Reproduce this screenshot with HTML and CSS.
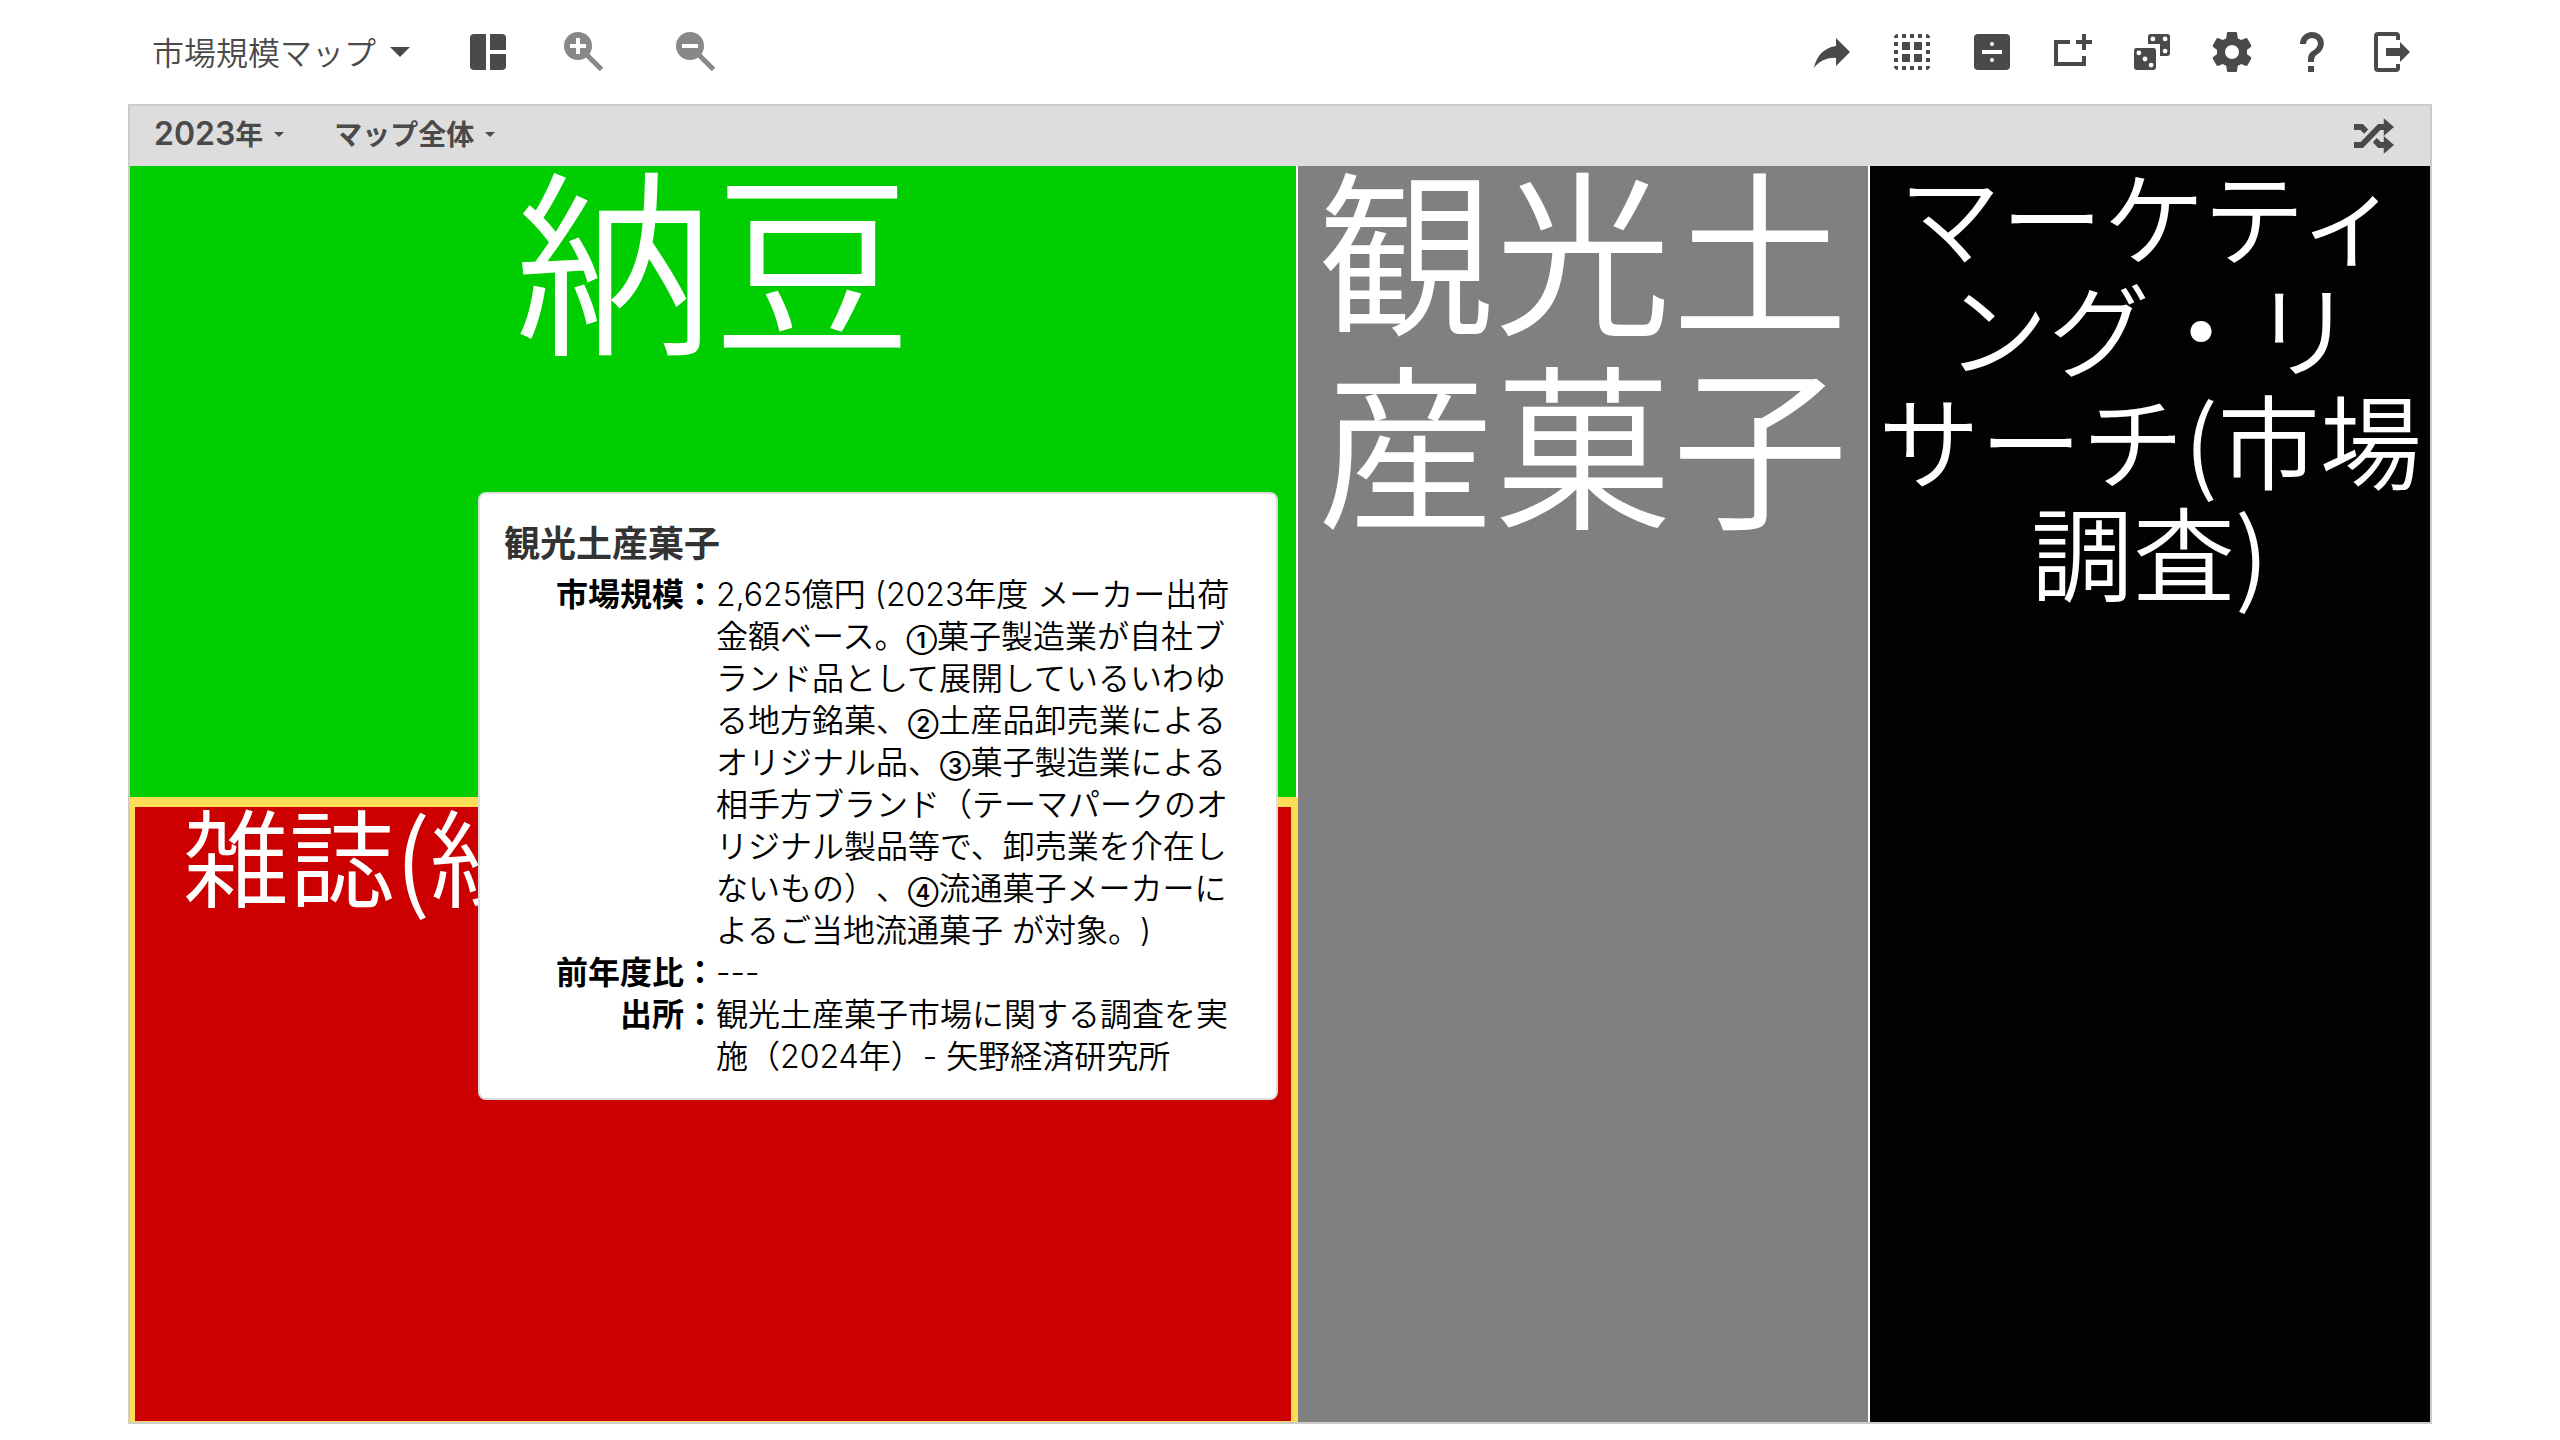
FILE: index.html
```html
<!DOCTYPE html>
<html lang="ja">
<head>
<meta charset="utf-8">
<meta name="viewport" content="width=device-width, initial-scale=1">
<title>市場規模マップ</title>
<link rel="stylesheet" href="styles.css">
</head>
<body>
<header class="toolbar">
  <button class="map-name" type="button">市場規模マップ<span class="caret"></span></button>
  <button class="icon-button layout-button" type="button" aria-label="レイアウト">
    <svg class="icon" viewBox="0 0 24 24"><path d="M5 3h6v18H5a2 2 0 0 1-2-2V5a2 2 0 0 1 2-2zM13 3h6a2 2 0 0 1 2 2v6h-8zM13 13h8v6a2 2 0 0 1-2 2h-6z"/></svg>
  </button>
  <div class="zoom-group">
    <button class="icon-button" type="button" aria-label="拡大">
      <svg class="icon-zoom" viewBox="0 0 40 40"><circle cx="14" cy="14" r="14"/><path class="handle" d="M23 23L37.500 37.500"/><path class="sign" d="M6 12h6V6h4v6h6v4h-6v6h-4v-6H6z"/></svg>
    </button>
    <button class="icon-button" type="button" aria-label="縮小">
      <svg class="icon-zoom" viewBox="0 0 40 40"><circle cx="14" cy="14" r="14"/><path class="handle" d="M23 23L37.500 37.500"/><path class="sign" d="M6 12h16v4H6z"/></svg>
    </button>
  </div>
  <nav class="actions">
    <button class="icon-button" type="button" aria-label="共有">
      <svg class="icon" viewBox="0 0 24 24"><path d="M21 12l-7-7v4C7 10 4 15 3 20c2.500-3.500 6-5.100 11-5.100V19z"/></svg>
    </button>
    <button class="icon-button" type="button" aria-label="グループ選択">
      <svg class="icon" viewBox="0 0 24 24"><path d="M5 3v2H3a2 2 0 0 1 2-2zM7 3h2v2H7zM11 3h2v2h-2zM15 3h2v2h-2zM19 3a2 2 0 0 1 2 2h-2zM3 7h2v2H3zM3 11h2v2H3zM3 15h2v2H3zM19 7h2v2h-2zM19 11h2v2h-2zM19 15h2v2h-2zM3 19h2v2a2 2 0 0 1-2-2zM7 19h2v2H7zM11 19h2v2h-2zM15 19h2v2h-2zM19 19h2a2 2 0 0 1-2 2zM7 7h4v4H7zM13 7h4v4h-4zM7 13h4v4H7zM13 13h4v4h-4z"/></svg>
    </button>
    <button class="icon-button" type="button" aria-label="分割">
      <svg class="icon" viewBox="0 0 24 24"><rect x="3" y="3" width="18" height="18" rx="2"/><g class="cut"><path d="M7 11h10v2H7z"/><circle cx="12" cy="8" r="1"/><circle cx="12" cy="16" r="1"/></g></svg>
    </button>
    <button class="icon-button" type="button" aria-label="追加">
      <svg class="icon" viewBox="0 0 24 24"><path d="M3 6h8v2H5v9h12v-3h2v5H3zM17 3h2v3h3v2h-3v3h-2V8h-3V6h3z"/></svg>
    </button>
    <button class="icon-button" type="button" aria-label="ランダム">
      <svg class="icon" viewBox="0 0 24 24"><path d="M11.220 3h8.560A1.220 1.220 0 0 1 21 4.220v8.560A1.220 1.220 0 0 1 19.780 14H16V8h-6V4.220A1.220 1.220 0 0 1 11.220 3z"/><rect x="3" y="10" width="11" height="11" rx="1.220"/><g class="cut"><circle cx="12.440" cy="5.440" r="1.200"/><circle cx="18.560" cy="5.440" r="1.200"/><circle cx="18.560" cy="11.560" r="1.200"/><circle cx="5.440" cy="12.440" r="1.200"/><circle cx="8.500" cy="15.500" r="1.200"/><circle cx="11.560" cy="18.560" r="1.200"/></g></svg>
    </button>
    <button class="icon-button" type="button" aria-label="設定">
      <svg class="icon" viewBox="0 0 24 24"><path d="M12,15.5A3.5,3.5 0 0,1 8.5,12A3.5,3.5 0 0,1 12,8.5A3.5,3.5 0 0,1 15.5,12A3.5,3.5 0 0,1 12,15.5M19.43,12.97C19.47,12.65 19.5,12.33 19.5,12C19.5,11.67 19.47,11.34 19.43,11L21.54,9.37C21.73,9.22 21.78,8.95 21.66,8.73L19.66,5.27C19.54,5.05 19.27,4.96 19.05,5.05L16.56,6.05C16.04,5.66 15.5,5.32 14.87,5.07L14.5,2.42C14.46,2.18 14.25,2 14,2H10C9.75,2 9.54,2.18 9.5,2.42L9.13,5.07C8.5,5.32 7.96,5.66 7.44,6.05L4.95,5.05C4.73,4.96 4.46,5.05 4.34,5.27L2.34,8.73C2.21,8.95 2.27,9.22 2.46,9.37L4.57,11C4.53,11.34 4.5,11.67 4.5,12C4.5,12.33 4.53,12.65 4.57,12.97L2.46,14.63C2.27,14.78 2.21,15.05 2.34,15.27L4.34,18.73C4.46,18.95 4.73,19.03 4.95,18.95L7.44,17.94C7.96,18.34 8.5,18.68 9.13,18.93L9.5,21.58C9.54,21.82 9.75,22 10,22H14C14.25,22 14.46,21.82 14.5,21.58L14.87,18.93C15.5,18.67 16.04,18.34 16.56,17.94L19.05,18.95C19.27,19.03 19.54,18.95 19.66,18.73L21.66,15.27C21.78,15.05 21.73,14.78 21.54,14.63L19.43,12.97Z"/></svg>
    </button>
    <button class="icon-button" type="button" aria-label="ヘルプ">
      <svg class="icon" viewBox="0 0 24 24"><path d="M10,19H13V22H10V19M12,2C17.35,2.22 19.68,7.62 16.5,11.67C15.67,12.67 14.33,13.33 13.67,14.17C13,15 13,16 13,17H10C10,15.33 10,13.92 10.67,12.92C11.33,11.92 12.67,11.33 13.5,10.67C15.92,8.43 15.32,5.26 12,5A3,3 0 0,0 9,8H6A6,6 0 0,1 12,2Z"/></svg>
    </button>
    <button class="icon-button" type="button" aria-label="ログアウト">
      <svg class="icon" viewBox="0 0 24 24"><path d="M16 17v-3H9v-4h7V7l5 5zM14 2a2 2 0 0 1 2 2v2h-2V4H5v16h9v-2h2v2a2 2 0 0 1-2 2H5a2 2 0 0 1-2-2V4a2 2 0 0 1 2-2z"/></svg>
    </button>
  </nav>
</header>
<main class="frame">
  <div class="filter-bar">
    <button class="filter" type="button"><span><span class="number">2023</span>年</span><span class="caret caret-small"></span></button>
    <button class="filter" type="button">マップ全体<span class="caret caret-small"></span></button>
    <button class="icon-button shuffle" type="button" aria-label="シャッフル">
      <svg class="icon-shuffle" viewBox="0 0 121 108"><path d="M0 18h27l16 16-12 13-12-11H0zM0 72h20L73 18h17V0l31 27-31 27V36H80L27 90H0zM69 60l12 12h9V54l31 27-31 27V90H73L57 73z"/></svg>
    </button>
  </div>
  <div class="map">
    <section class="tile tile-natto"><div class="tile-label">納豆</div></section>
    <section class="tile tile-magazine"><div class="tile-label">雑誌(紙</div></section>
    <section class="tile tile-souvenir"><div class="tile-label">観光土産菓子</div></section>
    <section class="tile tile-research"><div class="tile-label">マーケティ<br>ング・リ<br>サーチ(市場<br>調査)</div></section>
    <aside class="tooltip">
      <h2 class="tooltip-title">観光土産菓子</h2>
      <dl class="details">
        <dt>市場規模：</dt>
        <dd>2,625億円 (2023年度 メーカー出荷金額ベース。<span class="circled">①</span>菓子製造業が自社ブランド品として展開しているいわゆる地方銘菓、<span class="circled">②</span>土産品卸売業によるオリジナル品、<span class="circled">③</span>菓子製造業による相手方ブランド（テーマパークのオリジナル製品等で、卸売業を介在しないもの）、<span class="circled">④</span>流通菓子メーカーによるご当地流通菓子 が対象。)</dd>
        <dt>前年度比：</dt>
        <dd>---</dd>
        <dt>出所：</dt>
        <dd>観光土産菓子市場に関する調査を実施（2024年）- 矢野経済研究所</dd>
      </dl>
    </aside>
  </div>
</main>
</body>
</html>
```
FILE: styles.css
```css
* {
  box-sizing: border-box;
}

body {
  display: flex;
  flex-direction: column;
  min-height: 100vh;
  margin: 0;
  padding: 0 5% 16px;
  background: #fff;
  color: #4a4a4a;
  font-family: "Noto Sans CJK JP", sans-serif;
  text-spacing-trim: space-all;
}

button {
  padding: 0;
  border: 0;
  background: none;
  color: inherit;
  font: inherit;
  cursor: pointer;
}

svg {
  display: block;
  fill: currentColor;
}

.toolbar {
  display: flex;
  align-items: center;
  height: 104px;
  padding: 0 16px 0 24px;
}

.map-name {
  display: flex;
  align-items: center;
  gap: 14px;
  padding-bottom: 2px;
  font-size: 32px;
  font-weight: 350;
}

.caret {
  margin-top: 2px;
  border: 10px solid transparent;
  border-top-color: currentColor;
  border-bottom: 0;
}

.caret-small {
  border-width: 5px;
  border-bottom: 0;
}

.layout-button {
  margin-left: 54px;
}

.icon {
  width: 48px;
  height: 48px;
}

.cut {
  fill: #fff;
}

.zoom-group {
  display: flex;
  gap: 72px;
  margin-left: 52px;
  color: #888;
}

.icon-zoom {
  width: 40px;
  height: 40px;
}

.handle {
  stroke: currentColor;
  stroke-width: 5;
}

.sign {
  fill: #fff;
}

.actions {
  display: flex;
  gap: 32px;
  margin-left: auto;
}

.frame {
  display: flex;
  flex: 1;
  flex-direction: column;
  border: 2px solid #ccc;
}

.filter-bar {
  display: flex;
  align-items: center;
  gap: 50px;
  height: 60px;
  padding: 0 36px 6px 24px;
  background: #ddd;
}

.filter {
  display: flex;
  align-items: center;
  gap: 11px;
  font-size: 28px;
  font-weight: 700;
  line-height: 40px;
}

.number {
  font-family: Inter, sans-serif;
  font-size: 32px;
  font-weight: 600;
}

.shuffle {
  margin-left: auto;
  padding-top: 6px;
}

.icon-shuffle {
  width: 40px;
  height: 36px;
}

.map {
  position: relative;
  display: grid;
  flex: 1;
  grid-template-columns: 1168fr 572fr 560fr;
  grid-template-rows: 631fr 625fr;
}

.tile {
  min-width: 0;
  color: #fff;
  font-weight: 350;
  text-align: center;
}

.tile-label {
  margin-top: -18px;
}

.tile-natto {
  border-right: 2px solid #fff;
  background: #00ce00;
  font-size: 198px;
  line-height: 210px;
}

.tile-magazine {
  grid-row: 2;
  padding-left: 48px;
  border: solid #ffdc55;
  border-width: 10px 7px 1px 5px;
  background: #cc0000;
  font-size: 106px;
  line-height: 128px;
  text-align: left;
}

.tile-souvenir {
  grid-area: 1 / 2 / 3 / 3;
  border-right: 2px solid #fff;
  background: #808080;
  font-size: 177px;
  line-height: 194px;
}

.tile-research {
  grid-area: 1 / 3 / 3 / 4;
  background: #000300;
  font-size: 102px;
  line-height: 112px;
}

.tile-research .tile-label {
  margin-top: -8px;
}

.tooltip {
  position: absolute;
  top: 326px;
  left: 348px;
  width: 800px;
  padding: 20px 24px 20px;
  border: 2px solid #ddd;
  border-radius: 8px;
  background: #fff;
  color: #000;
}

.tooltip-title {
  margin: 0 0 6px;
  color: #333;
  font-size: 36px;
  font-weight: 700;
  line-height: 54px;
}

.details {
  display: grid;
  grid-template-columns: 212px 520px;
  margin: 0;
  font-family: Inter, "Noto Sans CJK JP", sans-serif;
  font-size: 32px;
  font-weight: 350;
  line-height: 42px;
}

.details dt {
  font-weight: 700;
  text-align: right;
}

.details dd {
  margin: 0;
}

.circled {
  font-size: 22px;
  font-weight: 600;
  line-height: 1;
}
```
